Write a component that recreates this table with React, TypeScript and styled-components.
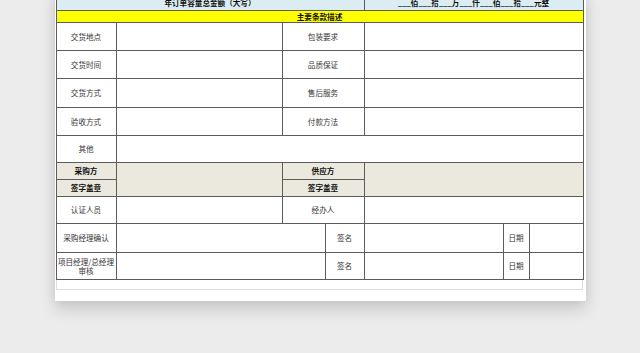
import React from 'react';
import styled, { createGlobalStyle } from 'styled-components';

const Global = createGlobalStyle`
  html, body { margin: 0; padding: 0; background: #ececec; }
  body { font-family: "Noto Sans CJK SC", "Noto Sans", sans-serif; }
`;

const Stage = styled.div`
  width: 640px;
  height: 353px;
  overflow: hidden;
  background: #ececec;
`;

const Sheet = styled.div`
  width: 531px;
  box-sizing: border-box;
  margin: -9px auto 0;
  padding: 0 3px 11px 1px;
  background: #fff;
  box-shadow: 0 9px 15px rgba(0, 0, 0, 0.14), 0 0 10px rgba(0, 0, 0, 0.07);
`;

const Table = styled.table`
  width: 527px;
  border-collapse: collapse;
  table-layout: fixed;
  border: 1px solid #222;
`;

const Row = styled.tr<{ $h: number }>`
  height: ${(p) => p.$h}px;
`;

const Cell = styled.td<{ $bg?: string; $bold?: boolean; $pt?: number }>`
  padding: ${(p) => p.$pt || 0}px 0 0;
  border: 1px solid #5c5c5c;
  background: ${(p) => p.$bg || '#fff'};
  font-size: 7.6px;
  line-height: 1.25;
  color: ${(p) => (p.$bold ? '#111' : '#353535')};
  font-weight: ${(p) => (p.$bold ? 700 : 400)};
  text-align: center;
  vertical-align: middle;
  white-space: pre-line;
  overflow: hidden;
`;

const Trailer = styled.div`
  height: 9px;
  border: 1px solid #dedede;
  border-top: none;
`;

const BLUE = '#dbedf3';
const YELLOW = '#ffff00';
const BEIGE = '#ebe9dd';

const terms = [
  ['交货地点', '包装要求', 28],
  ['交货时间', '品质保证', 28],
  ['交货方式', '售后服务', 29],
  ['验收方式', '付款方法', 28],
] as const;

export default function App() {
  return (
    <Stage>
      <Global />
      <Sheet>
        <Table>
          <colgroup>
            <col style={{ width: 60 }} />
            <col style={{ width: 166 }} />
            <col style={{ width: 43 }} />
            <col style={{ width: 39 }} />
            <col style={{ width: 139 }} />
            <col style={{ width: 26 }} />
            <col style={{ width: 54 }} />
          </colgroup>
          <tbody>
            <Row $h={19}>
              <Cell colSpan={4} $bg={BLUE} $bold $pt={4}>年订单容量总金额（大写）</Cell>
              <Cell colSpan={3} $bg={BLUE} $bold $pt={4}>___佰___拾___万___仟___佰___拾___元整</Cell>
            </Row>
            <Row $h={12}>
              <Cell colSpan={7} $bg={YELLOW} $bold>主要条款描述</Cell>
            </Row>
            {terms.map(([a, b, h]) => (
              <Row $h={h} key={a}>
                <Cell>{a}</Cell>
                <Cell />
                <Cell colSpan={2}>{b}</Cell>
                <Cell colSpan={3} />
              </Row>
            ))}
            <Row $h={27}>
              <Cell>其他</Cell>
              <Cell colSpan={6} />
            </Row>
            <Row $h={17}>
              <Cell $bg={BEIGE} $bold>采购方</Cell>
              <Cell rowSpan={2} $bg={BEIGE} />
              <Cell colSpan={2} $bg={BEIGE} $bold>供应方</Cell>
              <Cell colSpan={3} rowSpan={2} $bg={BEIGE} />
            </Row>
            <Row $h={17}>
              <Cell $bg={BEIGE} $bold>签字盖章</Cell>
              <Cell colSpan={2} $bg={BEIGE} $bold>签字盖章</Cell>
            </Row>
            <Row $h={27}>
              <Cell>认证人员</Cell>
              <Cell />
              <Cell colSpan={2}>经办人</Cell>
              <Cell colSpan={3} />
            </Row>
            <Row $h={29}>
              <Cell>采购经理确认</Cell>
              <Cell colSpan={2} />
              <Cell>签名</Cell>
              <Cell />
              <Cell>日期</Cell>
              <Cell />
            </Row>
            <Row $h={27}>
              <Cell>{'项目经理/总经理\n审核'}</Cell>
              <Cell colSpan={2} />
              <Cell>签名</Cell>
              <Cell />
              <Cell>日期</Cell>
              <Cell />
            </Row>
          </tbody>
        </Table>
        <Trailer />
      </Sheet>
    </Stage>
  );
}
